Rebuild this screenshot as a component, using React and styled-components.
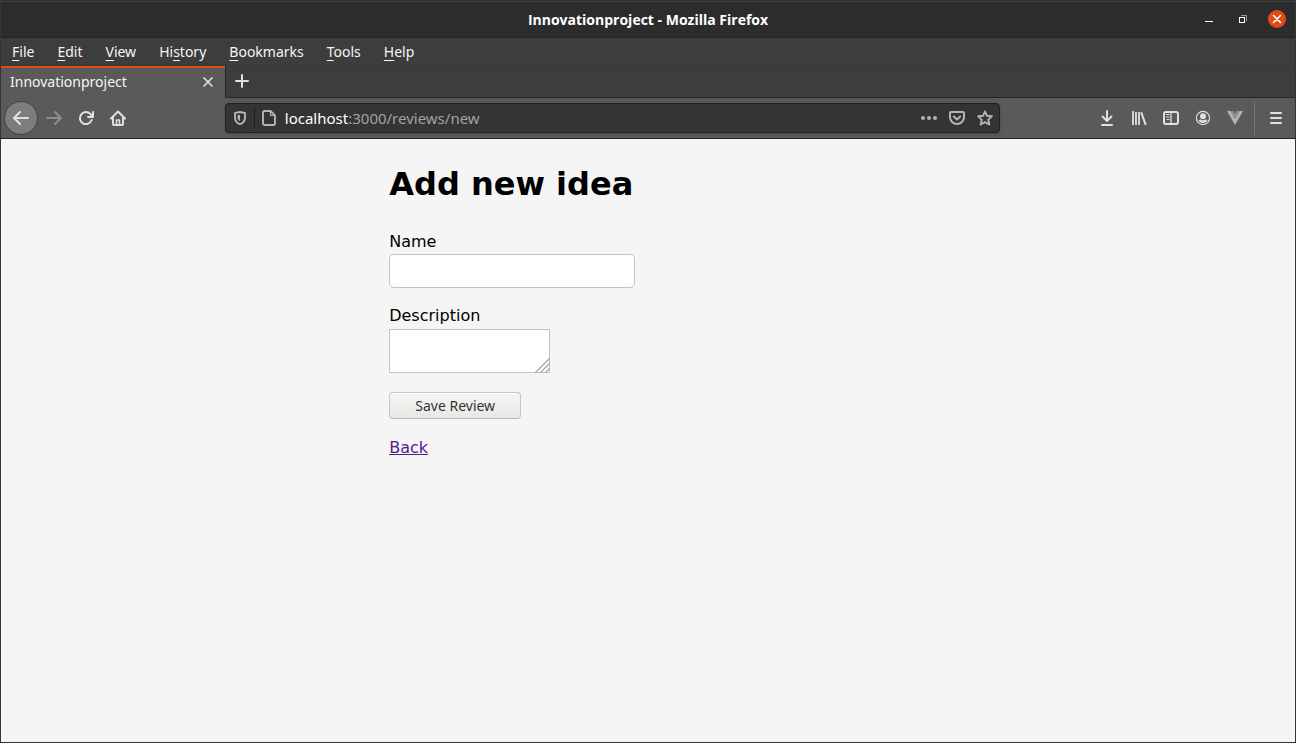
import React from "react";
import styled, { createGlobalStyle, css } from "styled-components";

const GlobalStyle = createGlobalStyle`
  *, *::before, *::after { box-sizing: border-box; }
  body { margin: 0; background: #f5f5f5; }
  button, input, textarea { font: inherit; margin: 0; padding: 0; }
  svg { display: block; flex: none; }
`;

const uiFont = css`
  font-family: "Noto Sans", "Open Sans", sans-serif;
  font-size: 14px;
  line-height: 20px;
`;

const Window = styled.div`
  min-height: 100vh;
  display: flex;
  flex-direction: column;
  border: 1px solid #353535;
  border-top-color: #323232;
  ${uiFont}
  color: #f5f5f5;
`;

const TitleBar = styled.header`
  height: 37px;
  display: grid;
  grid-template-columns: 1fr auto 1fr;
  align-items: center;
  background: #2c2c2c;
  border-top: 1px solid #404040;
  border-bottom: 1px solid #222;
`;

const Title = styled.div`
  grid-column: 2;
  font-family: "Open Sans", "Noto Sans", sans-serif;
  font-weight: 700;
  color: #fff;
`;

const WindowControls = styled.div`
  display: flex;
  justify-content: flex-end;
  gap: 16px;
  padding: 0 9px 1px 0;
`;

const PlainButton = styled.button`
  border: 0;
  background: transparent;
  color: ${(p) => p.$tone || "#e0e0e0"};
  display: flex;
  align-items: center;
  justify-content: center;
`;

const WindowButton = styled(PlainButton)`
  width: 18px;
  height: 18px;
  border-radius: 50%;
  background: ${(p) => (p.$close ? "#e24a18" : "transparent")};
`;

const MenuBar = styled.nav`
  height: 28px;
  display: flex;
  align-items: center;
  gap: 1px;
  background: #3d3d3d;
  border-bottom: 1px solid #383838;
`;

const MenuItem = styled(PlainButton)`
  display: block;
  height: 28px;
  padding: 0 11px;
  color: #f5f5f5;
  u { text-decoration: underline; text-underline-offset: 3px; text-decoration-thickness: 1px; text-decoration-skip-ink: none; }
`;

const TabStrip = styled.div`
  height: 32px;
  display: flex;
  background: #3d3d3d;
`;

const Tab = styled.div`
  width: 224px;
  display: flex;
  align-items: center;
  justify-content: space-between;
  padding: 0 9px 2px 9px;
  border-top: 2px solid #e24a18;
  background: #5a5a5a;
`;

const TabRest = styled.div`
  flex: 1;
  display: flex;
  align-items: center;
  padding-bottom: 2px;
  border-left: 1px solid #262626;
  border-bottom: 1px solid #262626;
`;

const NewTab = styled(PlainButton)`
  width: 32px;
  height: 28px;
`;

const NavBar = styled.div`
  height: 41px;
  display: flex;
  align-items: center;
  padding: 0 3px;
  background: #5a5a5a;
  border-bottom: 1px solid #222;
`;

const NavButton = styled(PlainButton)`
  width: 32px;
  height: 32px;
`;

const BackButton = styled(NavButton)`
  width: 34px;
  height: 34px;
  border: 1px solid #424242;
  border-radius: 50%;
  background: #7d7d7d;
`;

const Spring = styled.div`
  flex: 91 1 0;
`;

const UrlBar = styled.div`
  flex: 775 1 0;
  height: 30px;
  display: flex;
  align-items: center;
  background: #343434;
  border: 1px solid #212121;
  border-radius: 4px;
  box-shadow: 0 1px 3px rgba(0, 0, 0, 0.2);
`;

const UrlButton = styled(PlainButton)`
  width: 28px;
  height: 28px;
  color: #b4b4b4;
`;

const UrlSeparator = styled.span`
  width: 1px;
  height: 22px;
  background: #202020;
`;

const Address = styled.div`
  flex: 1;
  padding-left: 2px;
  font-size: 15px;
  color: #a2a2a2;
  b { font-weight: 400; color: #fff; }
`;

const ToolbarSeparator = styled.span`
  width: 1px;
  height: 34px;
  margin: 0 5px 0 3px;
  background: #777;
`;

const Page = styled.main`
  flex: 1;
  background: #f5f5f5;
  color: #000;
  font-family: "DejaVu Sans", sans-serif;
  font-size: 16px;
  line-height: 19px;
`;

const Content = styled.div`
  width: 40%;
  margin: 0 auto;
  padding: 26px 0;
`;

const Heading = styled.h1`
  margin: 0 0 29px;
  font-size: 32px;
  line-height: 38px;
  font-weight: 700;
  white-space: nowrap;
`;

const Field = styled.div`
  display: flex;
  flex-direction: column;
  align-items: flex-start;
  gap: 3px;
  margin-bottom: 18px;
`;

const TextInput = styled.input`
  width: 246px;
  height: 34px;
  padding: 0 8px;
  border: 1px solid #c9c3bd;
  border-radius: 5px;
  background: #fff;
`;

const AreaWrap = styled.div`
  position: relative;
  display: flex;
  margin: 1px 0;
`;

const TextArea = styled.textarea`
  width: 161px;
  height: 44px;
  padding: 2px;
  border: 1px solid #c6c2bc;
  background: #fff;
  resize: none;
`;

const Grip = styled.svg`
  position: absolute;
  right: 0;
  bottom: 0;
  pointer-events: none;
`;

const SubmitButton = styled.button`
  display: block;
  width: 132px;
  height: 27px;
  margin-bottom: 19px;
  ${uiFont}
  color: #2e3436;
  border: 1px solid #cac4be;
  border-bottom-color: #bdb5ad;
  border-radius: 4px;
  background: linear-gradient(#f6f5f4, #eae8e6);
  box-shadow: inset 0 1px #fff;
`;

const BackLink = styled.a`
  color: #551a8b;
`;

const Icon = ({ size = 16, children, width = 2 }) => (
  <svg width={size} height={size} viewBox={`0 0 ${size} ${size}`} fill="none" stroke="currentColor"
    strokeWidth={width} strokeLinecap="round" strokeLinejoin="round" aria-hidden="true">
    {children}
  </svg>
);

const menus = [
  ["", "F", "ile"],
  ["", "E", "dit"],
  ["", "V", "iew"],
  ["Hi", "s", "tory"],
  ["", "B", "ookmarks"],
  ["", "T", "ools"],
  ["", "H", "elp"],
];

const tools = [
  ["Downloads", <Icon key="i"><path d="M8 1v9.500M3.500 6.500L8 11l4.500-4.500M3 15h10" /></Icon>],
  ["Library", (
    <Icon key="i">
      <path d="M2 1v14M5 2v13M8 2v13" strokeLinecap="butt" strokeWidth="1.800" />
      <path d="M10.200 2.300l4.500 12.500" strokeLinecap="butt" />
    </Icon>
  )],
  ["Sidebars", (
    <Icon key="i">
      <rect x="1" y="2" width="14" height="12" rx="2" />
      <path d="M8 2v12" strokeWidth="1.300" />
      <path d="M3 4.500h3.500M3 7h3.500M3.500 9.500h3" strokeWidth="1" strokeLinecap="butt" />
    </Icon>
  )],
  ["Account", (
    <Icon key="i">
      <circle cx="8" cy="8" r="6.600" strokeWidth="1.200" />
      <circle cx="8" cy="6.200" r="3" fill="currentColor" stroke="none" />
      <path d="M3.300 9.800c1 .2 1.600 .1 2.400-.2 1.400 1 3.200 1 4.600 0 .8 .3 1.400 .4 2.400 .2-.7 2-2.500 3.300-4.700 3.300s-4-1.300-4.700-3.300z" fill="currentColor" stroke="none" />
    </Icon>
  )],
  ["Vue devtools", (
    <Icon key="i">
      <path d="M0 1h6l2 3.200L10 1h6L8 15z" fill="#b4b4b4" stroke="none" />
      <path d="M3.200 1H6l2 3.500L10 1h2.800L8 9.300z" fill="#8c8c8c" stroke="none" />
    </Icon>
  )],
];

export default function App() {
  return (
    <Window>
      <GlobalStyle />
      <TitleBar>
        <Title>Innovationproject - Mozilla Firefox</Title>
        <WindowControls>
          <WindowButton aria-label="Minimize">
            <Icon width={1}><path d="M4 10.500h8" stroke="#fff" strokeLinecap="butt" /></Icon>
          </WindowButton>
          <WindowButton aria-label="Restore">
            <Icon width={1}>
              <path d="M6 4.500h5.500V10" stroke="#999" strokeLinejoin="miter" strokeLinecap="butt" />
              <rect x="4.500" y="6.500" width="5" height="5" stroke="#fff" strokeLinejoin="miter" />
            </Icon>
          </WindowButton>
          <WindowButton $close aria-label="Close">
            <Icon><path d="M4.500 4.500l7 7M11.500 4.500l-7 7" stroke="#fff" strokeWidth="1.600" /></Icon>
          </WindowButton>
        </WindowControls>
      </TitleBar>
      <MenuBar>
        {menus.map(([before, key, after]) => (
          <MenuItem key={after}>{before}<u>{key}</u>{after}</MenuItem>
        ))}
      </MenuBar>
      <TabStrip>
        <Tab>
          <span>Innovationproject</span>
          <PlainButton aria-label="Close tab">
            <Icon><path d="M4 4l8 8M12 4l-8 8" strokeWidth="1.700" /></Icon>
          </PlainButton>
        </Tab>
        <TabRest>
          <NewTab aria-label="New tab">
            <Icon><path d="M8 2v12M2 8h12" /></Icon>
          </NewTab>
        </TabRest>
      </TabStrip>
      <NavBar>
        <BackButton aria-label="Back">
          <Icon><path d="M15 8H1.500M7 2L1 8l6 6" /></Icon>
        </BackButton>
        <NavButton aria-label="Forward" $tone="#8c8c8c">
          <Icon><path d="M1 8h13.500M9 2l6 6-6 6" /></Icon>
        </NavButton>
        <NavButton aria-label="Reload">
          <Icon>
            <path d="M13.600 10A6 6 0 1 1 12.500 4.200L14 6" />
            <path d="M15 2v5h-5" />
            <path d="M15 3.500V7h-3.500z" fill="currentColor" stroke="none" />
          </Icon>
        </NavButton>
        <NavButton aria-label="Home">
          <Icon>
            <path d="M1 8.500L8 1.500l7 7M3 8v6a1 1 0 0 0 1 1h8a1 1 0 0 0 1-1V8" />
            <path d="M6.500 15V10h3v5" strokeWidth="1.500" />
          </Icon>
        </NavButton>
        <Spring />
        <UrlBar>
          <UrlButton aria-label="Tracking protection">
            <Icon>
              <path d="M8 2L3 3v4.500C3 11 5 13.200 8 14.200 11 13.200 13 11 13 7.500V3z" strokeWidth="1.900" />
              <path d="M8 4.800v6.400C6.500 10.500 5.500 9 5.500 7.300V5.200z" fill="currentColor" stroke="none" />
            </Icon>
          </UrlButton>
          <UrlSeparator />
          <UrlButton aria-label="Site information">
            <Icon>
              <path d="M3.500 1H9.500l4.500 4.500V13.500a1.500 1.500 0 0 1-1.500 1.500h-9A1.500 1.500 0 0 1 2 13.500v-11A1.500 1.500 0 0 1 3.500 1z" strokeWidth="1.900" />
              <path d="M9.500 1v4.500H14" strokeWidth="1.200" />
            </Icon>
          </UrlButton>
          <Address><b>localhost</b>:3000/reviews/new</Address>
          <UrlButton aria-label="Page actions">
            <Icon>
              <g fill="currentColor" stroke="none">
                <circle cx="2" cy="8" r="2" /><circle cx="8" cy="8" r="2" /><circle cx="14" cy="8" r="2" />
              </g>
            </Icon>
          </UrlButton>
          <UrlButton aria-label="Save to Pocket">
            <Icon>
              <path d="M2 2h12a1 1 0 0 1 1 1v4a7 7 0 0 1-14 0V3a1 1 0 0 1 1-1z" />
              <path d="M4.800 6.500L8 9.500l3.200-3" />
            </Icon>
          </UrlButton>
          <UrlButton aria-label="Bookmark this page">
            <Icon><path d="M8 1.300l2 4.500 4.900.5-3.600 3.300 1 4.900L8 12.100l-4.300 2.400 1-4.900L1.100 6.300 6 5.800z" strokeWidth="1.900" /></Icon>
          </UrlButton>
        </UrlBar>
        <Spring />
        {tools.map(([label, icon]) => (
          <NavButton key={label} aria-label={label}>{icon}</NavButton>
        ))}
        <ToolbarSeparator />
        <NavButton aria-label="Open menu">
          <Icon><path d="M3 3h10M3 8h10M3 13h10" /></Icon>
        </NavButton>
      </NavBar>
      <Page>
        <Content>
          <Heading>Add new idea</Heading>
          <form onSubmit={(e) => e.preventDefault()}>
            <Field>
              <label htmlFor="name">Name</label>
              <TextInput id="name" type="text" />
            </Field>
            <Field>
              <label htmlFor="description">Description</label>
              <AreaWrap>
                <TextArea id="description" />
                <Grip width="15" height="15" viewBox="0 0 15 15" stroke="#aaa" strokeWidth="1.400" aria-hidden="true">
                  <path d="M0 15L15 0M5 15L15 5M10 15l5-5" />
                </Grip>
              </AreaWrap>
            </Field>
            <SubmitButton type="submit">Save Review</SubmitButton>
          </form>
          <BackLink href="#reviews">Back</BackLink>
        </Content>
      </Page>
    </Window>
  );
}
